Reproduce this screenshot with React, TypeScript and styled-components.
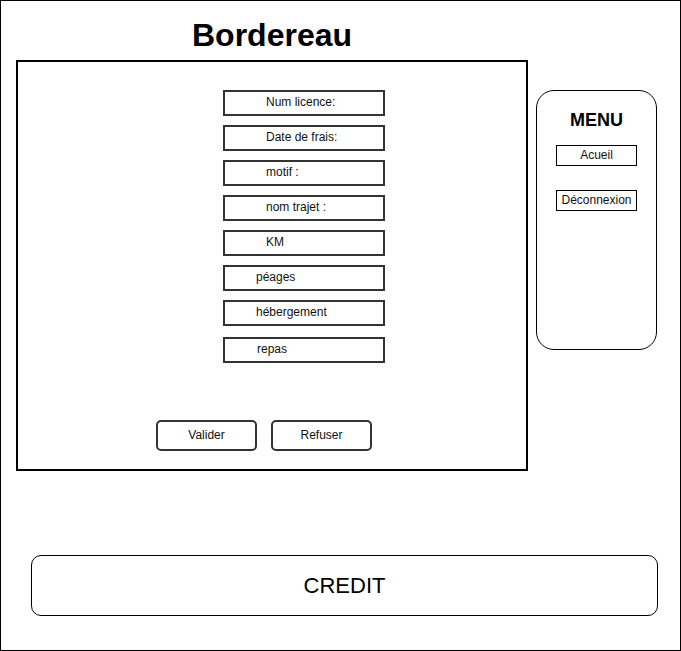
import React from 'react'
import styled, { createGlobalStyle } from 'styled-components'

const fields = [
  { label: 'Num licence:', indent: 41 },
  { label: 'Date de frais:', indent: 41 },
  { label: 'motif :', indent: 41 },
  { label: 'nom trajet :', indent: 41 },
  { label: 'KM', indent: 41 },
  { label: 'péages', indent: 31 },
  { label: 'hébergement', indent: 31 },
  { label: 'repas', indent: 32, shift: 2 },
]

export default function App() {
  return (
    <>
      <GlobalStyle />
      <Frame>
        <Top>
          <Left>
            <Title>Bordereau</Title>
            <Panel>
              <Fields>
                {fields.map((f) => (
                  <Field key={f.label} $indent={f.indent} $shift={f.shift || 0}>
                    {f.label}
                  </Field>
                ))}
              </Fields>
              <Actions>
                <Button>Valider</Button>
                <Button>Refuser</Button>
              </Actions>
            </Panel>
          </Left>
          <Menu>
            <MenuTitle>MENU</MenuTitle>
            <MenuItem>Acueil</MenuItem>
            <MenuItem $gap={24}>Déconnexion</MenuItem>
          </Menu>
        </Top>
        <Credit>CREDIT</Credit>
      </Frame>
    </>
  )
}

const GlobalStyle = createGlobalStyle`
  body {
    margin: 0;
    background: #fff;
    font-family: "Liberation Sans", Arial, sans-serif;
    color: #000;
  }
  * { box-sizing: border-box; }
`

const Frame = styled.div`
  width: 681px;
  height: 651px;
  border: 1px solid #000;
  padding-left: 15px;
  display: flex;
  flex-direction: column;
`

const Top = styled.div`
  display: flex;
  align-items: flex-start;
`

const Left = styled.div`
  display: flex;
  flex-direction: column;
  width: 512px;
`

const Title = styled.h1`
  margin: 0;
  padding: 16px 0 7px;
  font-size: 32px;
  line-height: 36px;
  font-weight: bold;
  text-align: center;
`

const Panel = styled.div`
  height: 411px;
  border: 2px solid #000;
  display: flex;
  flex-direction: column;
`

const Fields = styled.div`
  display: flex;
  flex-direction: column;
  gap: 9px;
  padding: 28px 0 0 205px;
`

const Field = styled.div<{ $indent: number; $shift: number }>`
  width: 162px;
  height: 26px;
  border: 2px solid #333;
  margin-top: ${(p) => p.$shift}px;
  padding-left: ${(p) => p.$indent}px;
  font-size: 12px;
  line-height: 21px;
  color: #111;
`

const Actions = styled.div`
  display: flex;
  gap: 14px;
  margin: 57px 0 0 138px;
`

const Button = styled.div`
  width: 101px;
  height: 31px;
  border: 2px solid #333;
  border-radius: 5px;
  font-size: 12px;
  line-height: 27px;
  text-align: center;
  color: #111;
`

const Menu = styled.div`
  width: 121px;
  height: 260px;
  margin: 89px 0 0 8px;
  border: 1px solid #000;
  border-radius: 18px;
  display: flex;
  flex-direction: column;
  align-items: center;
  padding-top: 19px;
`

const MenuTitle = styled.div`
  font-size: 18px;
  font-weight: bold;
  line-height: 21px;
`

const MenuItem = styled.div<{ $gap?: number }>`
  width: 81px;
  height: 21px;
  margin-top: ${(p) => p.$gap ?? 14}px;
  border: 1px solid #000;
  font-size: 12px;
  line-height: 19px;
  text-align: center;
  color: #111;
  white-space: nowrap;
`

const Credit = styled.div`
  width: 627px;
  height: 61px;
  margin: 84px 0 0 15px;
  border: 1px solid #000;
  border-radius: 10px;
  display: flex;
  align-items: center;
  justify-content: center;
  font-size: 22px;
`
